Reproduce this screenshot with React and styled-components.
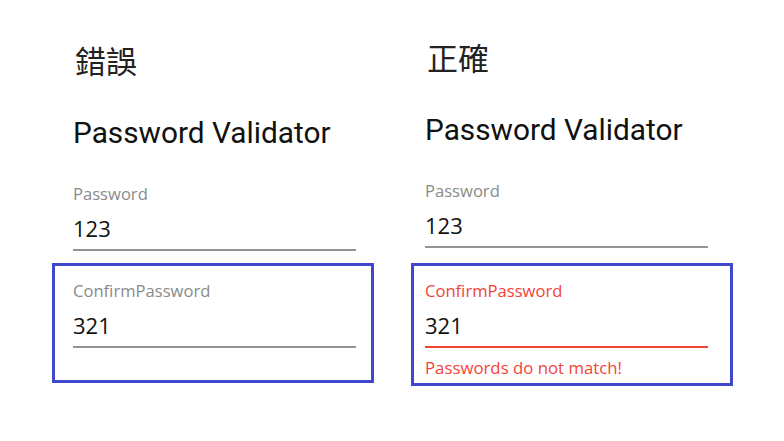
import React from 'react'
import styled, { createGlobalStyle } from 'styled-components'

const GlobalStyle = createGlobalStyle`
  html, body {
    margin: 0;
    padding: 0;
    background: #ffffff;
  }
  body {
    font-family: "Open Sans", "Noto Sans", sans-serif;
  }
`;

export default function App() {
  return (
    <>
      <GlobalStyle />
      <Page>
        <Column $top={38}>
          <Title>錯誤</Title>
          <Validator>
            <Heading>Password Validator</Heading>
            <Field label="Password" value="123" />
            <Highlight $offset={21} $mt={12} $pb={32}>
              <Field label="ConfirmPassword" value="321" />
            </Highlight>
          </Validator>
        </Column>
        <Column $top={35}>
          <Title>正確</Title>
          <Validator>
            <Heading>Password Validator</Heading>
            <Field label="Password" value="123" />
            <Highlight $offset={14} $mt={15} $pb={5}>
              <Field label="ConfirmPassword" value="321" error="Passwords do not match!" />
            </Highlight>
          </Validator>
        </Column>
      </Page>
    </>
  )
}

function Field({ label, value, error }) {
  const invalid = !!error
  return (
    <FieldBox>
      <Label $invalid={invalid}>{label}</Label>
      <Input type="text" value={value} readOnly $invalid={invalid} />
      {invalid && <ErrorText>{error}</ErrorText>}
    </FieldBox>
  )
}

const Page = styled.div`
  display: flex;
  gap: 69px;
  padding-left: 73px;
  width: 784px;
  height: 441px;
  box-sizing: border-box;
  overflow: hidden;
`;

const Column = styled.div`
  display: flex;
  flex-direction: column;
  width: 283px;
  padding-top: ${({ $top }) => $top}px;
`;

const Title = styled.h2`
  margin: 0 0 0 2px;
  font-family: "Noto Sans CJK TC", "Noto Sans CJK SC", sans-serif;
  font-weight: 400;
  font-size: 31px;
  line-height: 44px;
  color: #222;
`;

const Validator = styled.div`
  display: flex;
  flex-direction: column;
  margin-top: 33px;
`;

const Heading = styled.h1`
  margin: 0 0 33px;
  font-family: Roboto, "Liberation Sans", sans-serif;
  font-weight: 400;
  font-size: 29.8px;
  line-height: 36px;
  color: #111;
`;

const FieldBox = styled.div`
  display: flex;
  flex-direction: column;
`;

const Label = styled.label`
  font-size: 16.6px;
  line-height: 20px;
  color: ${({ $invalid }) => ($invalid ? '#f44336' : '#8a8a8a')};
`;

const Input = styled.input`
  display: block;
  width: 100%;
  height: 30px;
  margin: 9px 0 0;
  padding: 0 0 6px;
  box-sizing: content-box;
  border: none;
  border-bottom: 2px solid ${({ $invalid }) => ($invalid ? '#f44336' : '#949494')};
  background: transparent;
  outline: none;
  font-family: "Open Sans", "Noto Sans", sans-serif;
  font-size: 22px;
  line-height: 30px;
  color: #111;
`;

const ErrorText = styled.div`
  margin-top: 10px;
  font-size: 16.8px;
  line-height: 20px;
  color: #f44336;
`;

const Highlight = styled.div`
  margin: ${({ $mt }) => $mt}px 0 0 -${({ $offset }) => $offset}px;
  width: 322px;
  box-sizing: border-box;
  border: 3px solid #3f48cc;
  padding: 15px 0 ${({ $pb }) => $pb}px ${({ $offset }) => $offset - 3}px;
  & > div {
    width: 283px;
  }
`;
